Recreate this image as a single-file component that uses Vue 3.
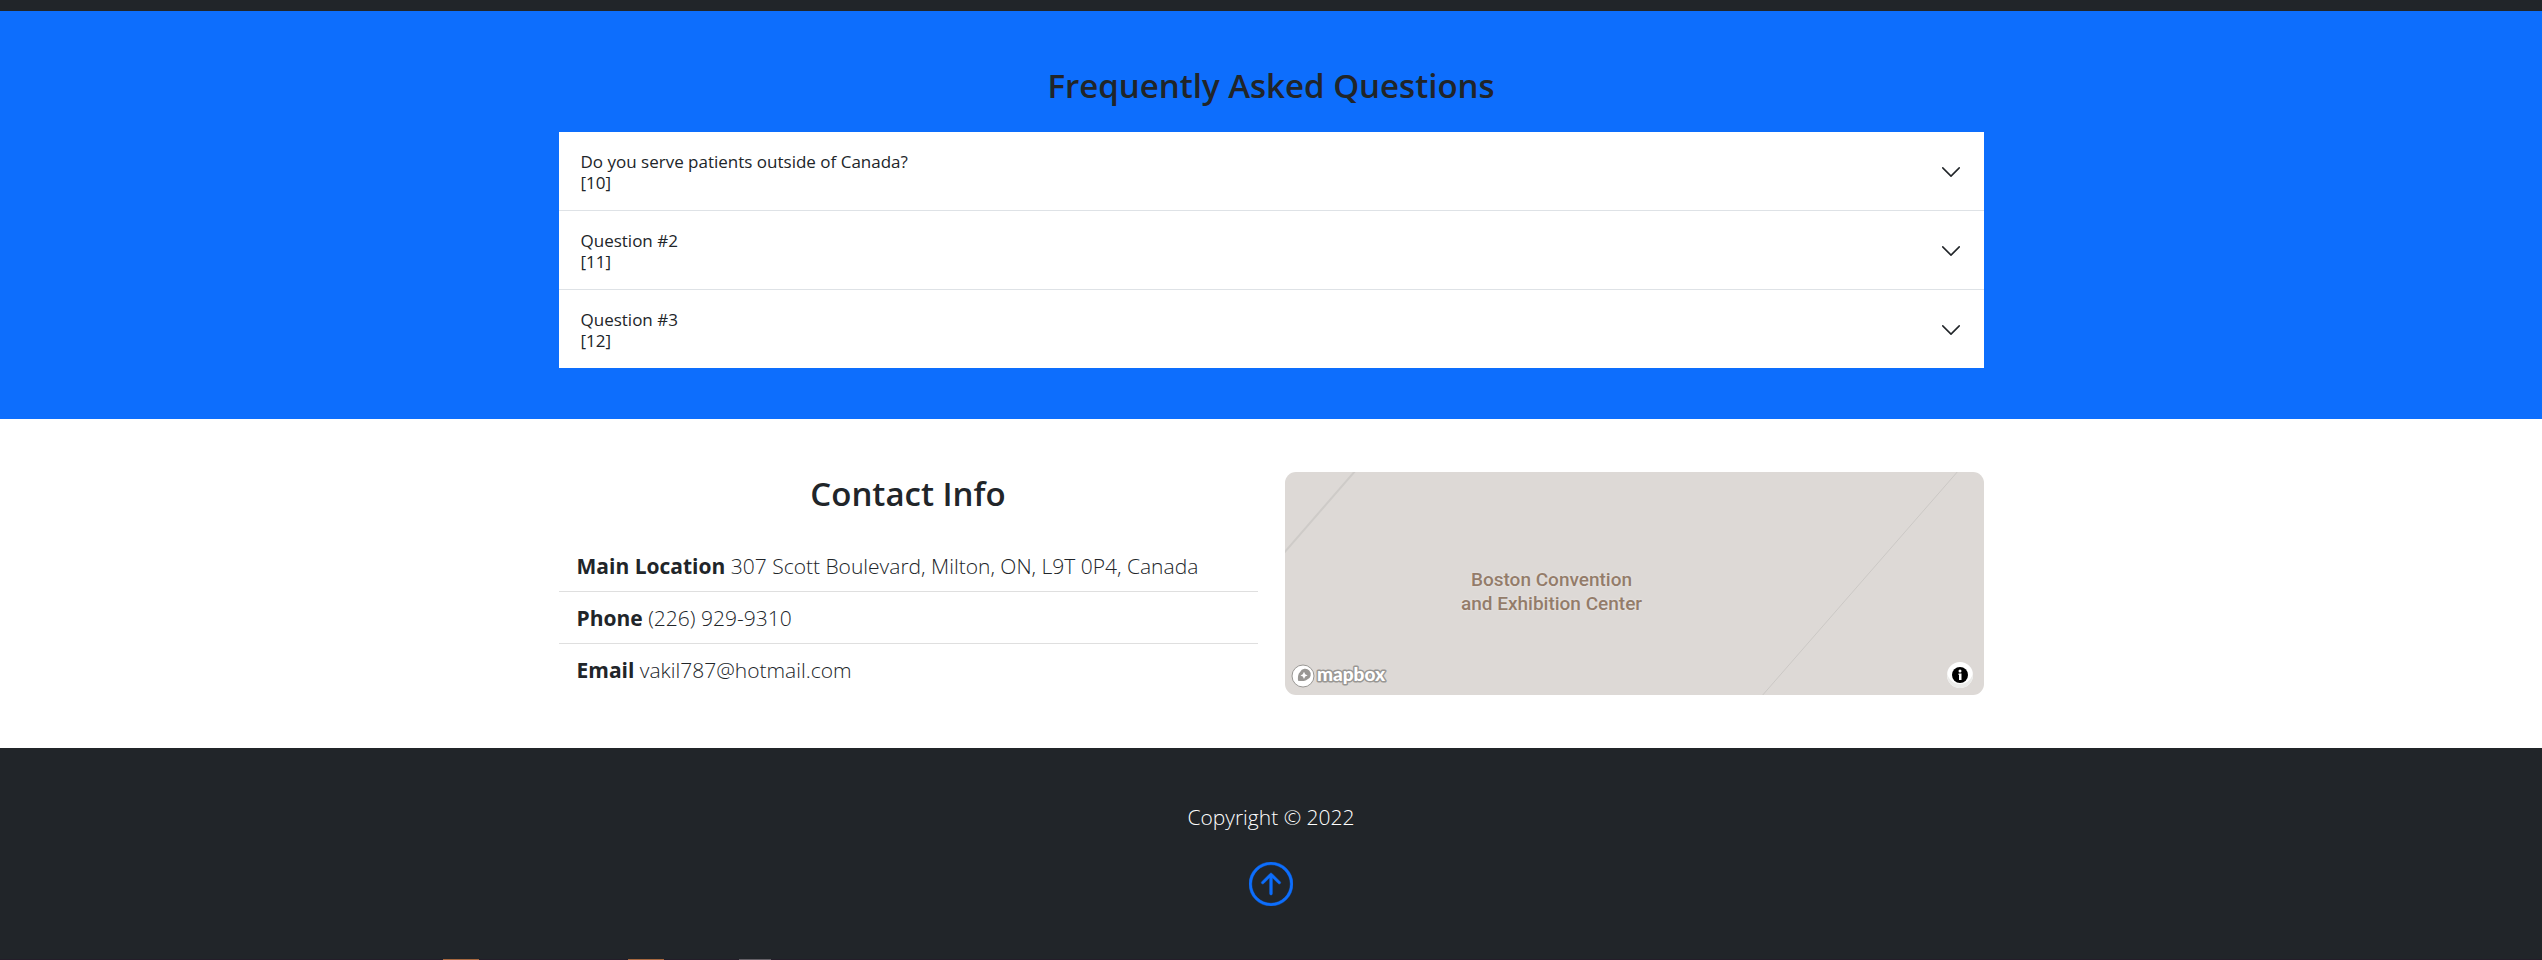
<script setup>
import { ref } from 'vue'

const questions = [
  { title: 'Do you serve patients outside of Canada?', id: '[10]' },
  { title: 'Question #2', id: '[11]' },
  { title: 'Question #3', id: '[12]' }
]
const selected = ref(-1)

const contacts = [
  { label: 'Main Location', value: '307 Scott Boulevard, Milton, ON, L9T 0P4, Canada' },
  { label: 'Phone', value: '(226) 929-9310' },
  { label: 'Email', value: 'vakil787@hotmail.com' }
]
</script>

<template>
  <div class="page" id="top">
    <div class="section-edge"></div>

    <section class="faq">
      <div class="container">
        <h2>Frequently Asked Questions</h2>
        <div class="accordion">
          <h3 v-for="(q, i) in questions" :key="q.id" class="accordion-item">
            <button type="button" :aria-pressed="selected === i" @click="selected = selected === i ? -1 : i">
              <span>{{ q.title }}<br />{{ q.id }}</span>
              <svg class="chevron" viewBox="0 0 16 16" aria-hidden="true">
                <path d="M2 5l6 6 6-6" />
              </svg>
            </button>
          </h3>
        </div>
      </div>
    </section>

    <section class="contact">
      <div class="container columns">
        <div class="details">
          <h2>Contact Info</h2>
          <ul>
            <li v-for="c in contacts" :key="c.label"><strong>{{ c.label }}</strong> {{ c.value }}</li>
          </ul>
        </div>
        <div class="map">
          <svg class="roads" aria-hidden="true">
            <line class="road-wide" x1="-2" y1="82" x2="71" y2="-2" />
            <line class="road-thin" x1="476" y1="225" x2="674" y2="-2" />
          </svg>
          <p class="place">Boston Convention<br />and Exhibition Center</p>
          <a class="mapbox" href="#top" aria-label="Mapbox logo">
            <svg viewBox="0 0 100 26" aria-hidden="true">
              <circle class="ring" cx="13" cy="13" r="11" />
              <path class="pin" d="M8 17.8C7.7 14 8 10.800 10.100 9A5.600 5.600 0 1 1 17.200 16.600C15 18.400 11.700 18.200 8 17.800Z" />
              <path class="spark" d="M14 8.800l1.200 2.400 2.400 1.200-2.400 1.200L14 16l-1.200-2.400-2.400-1.200 2.400-1.200z" />
              <text x="27" y="18">mapbox</text>
            </svg>
          </a>
          <button class="info" type="button" aria-label="Toggle attribution">
            <svg viewBox="0 0 26 26" aria-hidden="true">
              <circle cx="13" cy="13" r="8" />
              <circle class="mark" cx="13" cy="9" r="1.500" />
              <path class="mark" d="M11.500 11.500h3V18h-2.500v-5h-.5z" />
            </svg>
          </button>
        </div>
      </div>
    </section>

    <footer>
      <p>Copyright © 2022</p>
      <a href="#top" aria-label="Back to top">
        <svg viewBox="0 0 16 16" aria-hidden="true">
          <path fill-rule="evenodd" d="M1 8a7 7 0 1 0 14 0A7 7 0 0 0 1 8zm15 0A8 8 0 1 1 0 8a8 8 0 0 1 16 0zm-7.500 3.500a.5.5 0 0 1-1 0V5.707L5.354 7.854a.5.5 0 1 1-.708-.708l3-3a.5.5 0 0 1 .708 0l3 3a.5.5 0 0 1-.708.708L8.500 5.707V11.500z" />
        </svg>
      </a>
    </footer>
    <div class="bottom-strip"></div>
  </div>
</template>

<style>
body {
  margin: 0;
  background: #fff;
}
</style>

<style scoped>
.page {
  font-family: "Open Sans", "Noto Sans", sans-serif;
  color: #212529;
}
.section-edge {
  height: 11px;
  background: #212529;
}
.container {
  max-width: 1425px;
  margin: 0 auto;
}
h2 {
  margin: 0 0 24px;
  font-size: 33px;
  line-height: 44px;
  font-weight: 600;
  text-align: center;
}
.faq {
  padding: 53px 24px 51px;
  background: #0d6efd;
}
.accordion {
  background: #fff;
}
.accordion-item {
  margin: 0;
  border-bottom: 1px solid #dee2e6;
}
.accordion-item:last-child {
  border-bottom: 0;
}
.accordion-item button {
  display: flex;
  align-items: center;
  justify-content: space-between;
  width: 100%;
  padding: 19px 22px 17px;
  border: 0;
  background: none;
  color: inherit;
  font-family: inherit;
  font-size: 17px;
  line-height: 21px;
  text-align: left;
  cursor: pointer;
}
.chevron {
  width: 22px;
  height: 22px;
  fill: none;
  stroke: #212529;
  stroke-width: 1.1;
  stroke-linecap: round;
  stroke-linejoin: round;
}
.contact {
  padding: 53px 24px;
  background: #fff;
}
.columns {
  display: flex;
  gap: 27px;
}
.details,
.map {
  flex: 1;
  min-width: 0;
}
ul {
  margin: 0;
  padding: 0;
  list-style: none;
}
li {
  padding: 10px 18px 8px;
  border-bottom: 1px solid #dfdfdf;
  font-size: 21px;
  line-height: 33px;
  font-weight: 300;
}
li:last-child {
  border-bottom: 0;
}
strong {
  font-weight: 700;
}
.map {
  position: relative;
  overflow: hidden;
  border-radius: 11px;
  background: #ddd9d6;
}
.roads {
  position: absolute;
  inset: 0;
  width: 100%;
  height: 100%;
}
.road-wide {
  stroke: #cecbc8;
  stroke-width: 2;
}
.road-thin {
  stroke: #cbc8c5;
  stroke-width: 1;
}
.place {
  position: absolute;
  top: 96px;
  left: 167px;
  width: 200px;
  margin: 0;
  font-family: Roboto, sans-serif;
  font-size: 19px;
  line-height: 24px;
  font-weight: 500;
  text-align: center;
  color: #937c6a;
  text-shadow: 0 0 2px #efebe8;
}
.mapbox {
  position: absolute;
  left: 5px;
  bottom: 6px;
}
.mapbox svg {
  display: block;
  width: 100px;
  height: 26px;
}
.ring {
  fill: #fff;
  stroke: #999794;
  stroke-width: 1;
}
.pin {
  fill: #999794;
}
.spark {
  fill: #fff;
}
.mapbox text {
  font-family: Lato, sans-serif;
  font-size: 19px;
  font-weight: 900;
  fill: #fff;
  stroke: #999794;
  stroke-width: 3;
  stroke-linejoin: round;
  paint-order: stroke;
}
.info {
  position: absolute;
  right: 11px;
  bottom: 7px;
  padding: 0;
  border: 0;
  border-radius: 50%;
  background: #fff;
  box-shadow: inset 0 -4px 0 #ececea;
  cursor: pointer;
}
.info svg {
  display: block;
  width: 26px;
  height: 26px;
}
.info .mark {
  fill: #fff;
}
footer {
  display: flex;
  flex-direction: column;
  align-items: center;
  gap: 28px;
  padding: 53px 24px;
  background: #212529;
  color: #fff;
}
footer p {
  margin: 0;
  font-size: 21px;
  line-height: 33px;
  font-weight: 300;
}
footer a,
footer svg {
  display: block;
  width: 44px;
  height: 44px;
}
footer path {
  fill: #0d6efd;
  stroke: #0d6efd;
  stroke-width: 0.15;
}
.bottom-strip {
  height: 1px;
  background: linear-gradient(
    90deg,
    #241d29 443px, #a8683f 443px 479px,
    #241d29 479px 628px, #a8683f 628px 664px,
    #241d29 664px 739px, #656067 739px 771px,
    #241d29 771px
  );
}
</style>
